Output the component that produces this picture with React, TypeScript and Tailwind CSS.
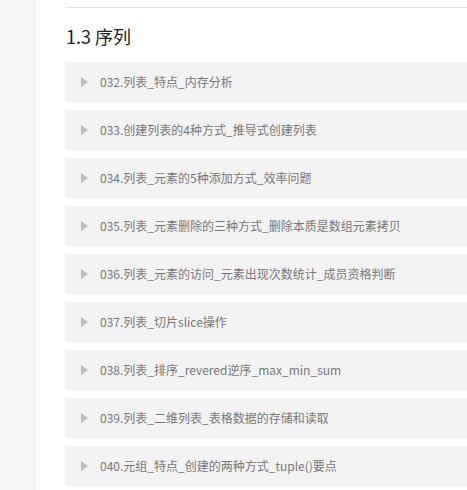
import React from "react";

const items = [
  "032.列表_特点_内存分析",
  "033.创建列表的4种方式_推导式创建列表",
  "034.列表_元素的5种添加方式_效率问题",
  "035.列表_元素删除的三种方式_删除本质是数组元素拷贝",
  "036.列表_元素的访问_元素出现次数统计_成员资格判断",
  "037.列表_切片slice操作",
  "038.列表_排序_revered逆序_max_min_sum",
  "039.列表_二维列表_表格数据的存储和读取",
  "040.元组_特点_创建的两种方式_tuple()要点",
];

export default function App() {
  return (
    <div
      className="flex h-[490px] w-[467px] overflow-hidden bg-white"
      style={{ fontFamily: '"Microsoft YaHei", "Noto Sans CJK SC", "Noto Sans", sans-serif' }}
    >
      <div className="w-[36px] shrink-0 bg-[#f5f5f5]" />
      <div className="flex-1 pl-[30px]">
        <div className="mt-[7px] h-px w-[500px] bg-[#e3e3e3]" />
        <h2 className="mt-[16px] mb-[14px] h-[24px] text-[18px] leading-[24px] text-[#222]">1.3 序列</h2>
        <div className="flex flex-col gap-[8px]">
          {items.map((t) => (
            <div key={t} className="flex h-[40px] w-[420px] items-center bg-[#f3f3f3] pl-[15px]">
              <svg width="7" height="10" viewBox="0 0 7 10" className="shrink-0">
                <path d="M0 0 L7 5 L0 10 Z" fill="#bdbdbd" />
              </svg>
              <span className="ml-[12px] whitespace-nowrap text-[12px] text-[#777]">{t}</span>
            </div>
          ))}
        </div>
      </div>
    </div>
  );
}
